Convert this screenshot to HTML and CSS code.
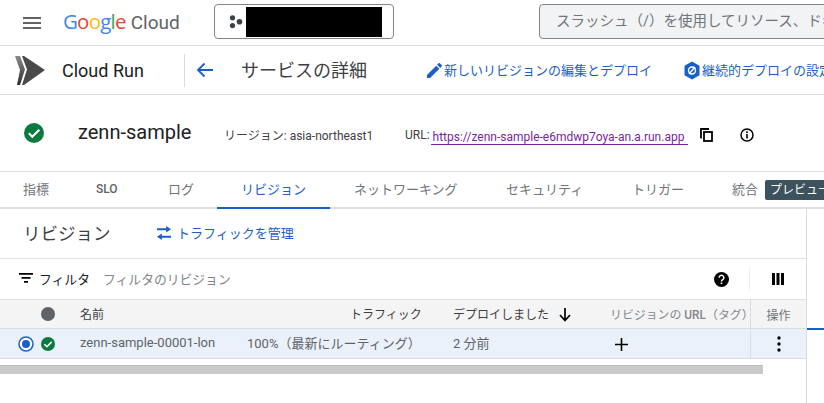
FILE: index.html
```html
<!DOCTYPE html>
<html lang="ja">
<head>
<meta charset="utf-8">
<title>Cloud Run</title>
<link rel="stylesheet" href="styles.css">
</head>
<body>
<div class="page">
  <header class="topbar">
    <svg class="menu" width="18" height="12" viewBox="0 0 18 12"><path d="M0 0h18v2H0zM0 5h18v2H0zM0 10h18v2H0z" fill="#5f6368"/></svg>
    <div class="logo"><span class="g-b">G</span><span class="g-r">o</span><span class="g-y">o</span><span class="g-b">g</span><span class="g-g">l</span><span class="g-r">e</span><span class="logo-cloud">Cloud</span></div>
    <div class="project">
      <svg width="14" height="14" viewBox="0 0 14 14"><circle cx="3.500" cy="2.800" r="2.600" fill="#3c4043"/><circle cx="3.500" cy="10.600" r="2.600" fill="#3c4043"/><circle cx="10.500" cy="6.800" r="2.800" fill="#3c4043"/></svg>
      <div class="redact"></div>
    </div>
    <div class="search">スラッシュ（/）を使用してリソース、ドキュメント、プロダクトなどを検索</div>
  </header>
  <nav class="actionbar">
    <div class="product">
      <svg width="30" height="30" viewBox="0 0 30 30"><defs><linearGradient id="cr" x1="0" y1="0" x2="0" y2="1"><stop offset="0" stop-color="#8a8a8a"/><stop offset="1" stop-color="#2f2f2f"/></linearGradient></defs><path d="M0 1l5 0 5 13.500-5 15.500-3 0 3-15z" fill="url(#cr)"/><path d="M7 1l2 0 21 14-21 15-2 0 5-15.500z" fill="#4a4a4a"/></svg>
      <span class="product-name">Cloud Run</span>
    </div>
    <div class="back">
      <svg width="18" height="16" viewBox="0 0 18 16"><path d="M17 8H2.500M8.500 1.500L2 8l6.500 6.500" fill="none" stroke="#1a5fc9" stroke-width="1.800"/></svg>
    </div>
    <h1 class="page-title">サービスの詳細</h1>
    <a class="action action-edit">
      <svg width="15" height="15" viewBox="3 3 18 18"><path d="M3 17.250V21h3.750L17.810 9.940l-3.750-3.750L3 17.250zM20.710 7.040a1 1 0 0 0 0-1.410l-2.340-2.340a1 1 0 0 0-1.410 0l-1.830 1.830 3.750 3.750 1.830-1.830z" fill="#1a5fc9"/></svg>
      <span>新しいリビジョンの編集とデプロイ</span>
    </a>
    <a class="action action-ci">
      <svg width="18" height="19" viewBox="0 0 18 19"><path d="M9 .5l7.500 4.200v9.600L9 18.500 1.500 14.300V4.700z" fill="#1a5fc9"/><circle cx="9" cy="9.500" r="3.500" fill="none" stroke="#fff" stroke-width="1.400"/><path d="M6 13l6-7" stroke="#fff" stroke-width="1.400"/></svg>
      <span>継続的デプロイの設定</span>
    </a>
  </nav>
  <section class="summary">
    <svg class="status-big" width="20" height="20" viewBox="0 0 20 20"><circle cx="10" cy="10" r="10" fill="#0b7a3e"/><path d="M4.800 10.300l3.500 3.500 7-7" fill="none" stroke="#fff" stroke-width="2.200"/></svg>
    <span class="service-name">zenn-sample</span>
    <span class="meta meta-region">リージョン: asia-northeast1</span>
    <span class="meta meta-url">URL:</span>
    <a class="url">https://zenn-sample-e6mdwp7oya-an.a.run.app</a>
    <svg class="icon-copy" width="13" height="14" viewBox="0 0 13 14"><path d="M1 10.500V1h8" fill="none" stroke="#000" stroke-width="1.800"/><rect x="4" y="4" width="8" height="9" fill="none" stroke="#000" stroke-width="1.800"/></svg>
    <svg class="icon-info" width="14" height="14" viewBox="0 0 14 14"><circle cx="7" cy="7" r="6" fill="none" stroke="#000" stroke-width="1.500"/><path d="M6.200 6h1.600v4.500H6.200zM6.200 3.300h1.600v1.600H6.200z"/></svg>
  </section>
  <div class="tabs">
    <span class="tab tab-metrics">指標</span>
    <span class="tab tab-slo">SLO</span>
    <span class="tab tab-log">ログ</span>
    <span class="tab tab-rev">リビジョン</span>
    <span class="tab tab-net">ネットワーキング</span>
    <span class="tab tab-sec">セキュリティ</span>
    <span class="tab tab-trig">トリガー</span>
    <span class="tab tab-int">統合</span>
    <span class="badge">プレビュー</span>
  </div>
  <div class="content">
    <main class="main">
      <div class="section-head">
        <h2 class="section-title">リビジョン</h2>
        <a class="traffic">
          <svg width="14" height="14" viewBox="0 0 13 13"><path d="M0 2h8.500V0L13 3 8.500 6V4H0zM13 9H4.500V7L0 10l4.500 3v-2H13z" fill="#1a5fc9"/></svg>
          <span>トラフィックを管理</span>
        </a>
      </div>
      <div class="filter">
        <svg class="filter-icon" width="14" height="10" viewBox="0 0 14 10"><path d="M0 0h14v1.700H0zM2.500 4h9v1.700h-9zM5 8h4v1.700H5z"/></svg>
        <span class="filter-label">フィルタ</span>
        <span class="filter-hint">フィルタのリビジョン</span>
        <svg class="help" width="15" height="15" viewBox="0 0 14 14"><circle cx="7" cy="7" r="7"/><path d="M4.800 5.400A2.200 2.200 0 1 1 8.200 7.200c-.8.500-1.200.8-1.200 1.600" fill="none" stroke="#fff" stroke-width="1.400"/><rect x="6.200" y="9.800" width="1.500" height="1.500" fill="#fff"/></svg>
        <span class="filter-sep"></span>
        <svg class="columns" width="12" height="12" viewBox="0 0 12 12"><path d="M0 0h3v12H0zM4.500 0h3v12h-3zM9 0h3v12H9z"/></svg>
      </div>
      <div class="thead">
        <span class="c-radio"></span>
        <span class="c-status"><svg width="14" height="14" viewBox="0 0 14 14"><circle cx="7" cy="7" r="7" fill="#5f6368"/></svg></span>
        <span class="c-name">名前</span>
        <span class="c-traffic th-traffic">トラフィック</span>
        <span class="c-deploy th-deploy">デプロイしました
          <svg width="12" height="14" viewBox="0 0 12 14"><path d="M6 0v12M1 7l5 5.500L11 7" fill="none" stroke="#000" stroke-width="1.700"/></svg>
        </span>
        <span class="c-url th-url">リビジョンの <b>URL</b>（タグ）</span>
        <span class="c-act th-act">操作</span>
      </div>
      <div class="trow">
        <span class="c-radio"><svg width="16" height="16" viewBox="0 0 16 16"><circle cx="8" cy="8" r="7" fill="#fff" stroke="#1a5fc9" stroke-width="1.500"/><circle cx="8" cy="8" r="4" fill="#1a5fc9"/></svg></span>
        <span class="c-status"><svg width="14" height="14" viewBox="0 0 14 14"><circle cx="7" cy="7" r="7" fill="#0b7a3e"/><path d="M3.400 7.200l2.500 2.500 4.800-4.800" fill="none" stroke="#fff" stroke-width="1.600"/></svg></span>
        <span class="c-name">zenn-sample-00001-lon</span>
        <span class="c-traffic">100%（最新にルーティング）</span>
        <span class="c-deploy">2 分前</span>
        <span class="c-url"><svg width="13" height="13" viewBox="0 0 13 13"><path d="M6.500 0v13M0 6.500h13" stroke="#000" stroke-width="1.600"/></svg></span>
        <span class="c-act"><svg width="4" height="16" viewBox="0 0 4 16"><circle cx="2" cy="2" r="1.700"/><circle cx="2" cy="8" r="1.700"/><circle cx="2" cy="14" r="1.700"/></svg></span>
      </div>
      <div class="scroll"></div>
    </main>
    <aside class="side"><div class="side-mark"></div></aside>
  </div>
</div>
</body>
</html>
```
FILE: styles.css
```css
* { box-sizing: border-box; }
html, body { margin: 0; padding: 0; }
body { background: #fff; font-family: Roboto, "Noto Sans CJK JP", sans-serif; overflow: hidden; }
.page { width: 824px; height: 403px; overflow: hidden; display: flex; flex-direction: column; }
a { text-decoration: none; }
h1, h2 { margin: 0; font-weight: 400; }
svg { flex: none; }

.topbar { height: 46px; flex: none; display: flex; align-items: center; border-bottom: 1px solid #dadce0; padding-left: 23px; white-space: nowrap; }
.logo { margin-left: 22px; width: 151px; flex: none; font-family: "Open Sans", sans-serif; font-size: 20.500px; letter-spacing: -.8px; line-height: 24px; margin-top: -1px; }
.g-b { color: #4285f4; } .g-r { color: #ea4335; } .g-y { color: #fbbc05; } .g-g { color: #34a853; }
.logo-cloud { color: #5f6368; margin-left: 5px; font-family: Roboto, sans-serif; font-size: 19px; letter-spacing: 0; }
.project { width: 180px; height: 35px; border: 1px solid #80868b; border-radius: 4px; display: flex; align-items: center; padding-left: 14px; flex: none; margin-top: -2px; }
.redact { width: 136px; height: 30px; background: #000; margin-left: 3px; }
.search { margin-left: 145px; flex: none; width: 420px; height: 35px; margin-top: -2px; background: #f1f3f4; border: 1px solid #80868b; border-radius: 4px; padding-left: 16px; line-height: 33px; font-size: 14.500px; color: #70757a; overflow: hidden; }

.actionbar { height: 49px; flex: none; display: flex; align-items: center; border-bottom: 1px solid #dadce0; padding-left: 15px; white-space: nowrap; }
.product { width: 170px; height: 33px; display: flex; align-items: center; border-right: 1px solid #dadce0; flex: none; }
.product-name { margin-left: 17px; font-size: 18px; color: #202124; }
.back { margin-left: 11px; width: 18px; height: 16px; flex: none; line-height: 0; }
.page-title { margin-left: 27px; font-size: 18px; width: 186px; flex: none; color: #3c4043; margin-top: -3px; }
.action { display: flex; align-items: center; color: #1a5fc9; font-size: 13px; flex: none; gap: 1px; }
.action span { margin-top: -2px; }
.action-edit { width: 256px; gap: 2px; }

.summary { height: 76px; flex: none; display: flex; align-items: center; padding-left: 24px; white-space: nowrap; }
.service-name { margin-left: 34px; font-size: 20px; color: #202124; width: 146px; flex: none; margin-top: -3px; }
.meta { font-size: 12px; color: #3c4043; flex: none; margin-top: 3px; }
.meta-region { width: 181px; }
.url { margin-left: 1px; color: #7b1fa2; font-size: 12px; border-bottom: 1px solid #7b1fa2; padding: 1px 1px 0 2px; width: 257px; flex: none; line-height: 13px; margin-top: 8px; }
.icon-copy { margin-left: 12px; margin-top: 4px; }
.icon-info { margin-left: 27px; margin-top: 4px; }

.tabs { height: 38px; flex: none; display: flex; align-items: stretch; border-top: 1px solid #e0e0e0; border-bottom: 2px solid #e0e0e0; padding-left: 23px; white-space: nowrap; }
.tab { font-size: 13px; color: #70757a; line-height: 35px; flex: none; }
.tab-metrics { width: 73px; }
.tab-slo { width: 72px; color: #5f6368; font-weight: 500; font-size: 12px; }
.tab-log { width: 49px; }
.tab-rev { width: 113px; text-align: center; color: #1a5fc9; margin-right: 24px; border-bottom: 2px solid #1a5fc9; height: 37px; }
.tab-net { width: 152px; }
.tab-sec { width: 126px; }
.tab-trig { width: 100px; }
.tab-int { width: 33px; }
.badge { height: 20px; margin-top: 8px; background: #3c525c; color: #fff; font-size: 12px; line-height: 20px; border-radius: 2px; padding: 0 5px; flex: none; }

.content { flex: 1; display: flex; min-height: 0; }
.main { width: 807px; flex: none; border-right: 1px solid #dadce0; }
.side { flex: 1; padding-top: 119px; }
.side-mark { height: 2px; background: #1a5fc9; }

.section-head { height: 50px; display: flex; align-items: center; padding: 0 0 2px 23px; border-bottom: 1px solid #e0e0e0; }
.section-title { font-size: 17.500px; color: #3c4043; width: 134px; flex: none; }
.traffic { display: flex; align-items: center; gap: 6px; color: #1a5fc9; font-size: 13px; }

.filter { height: 41px; display: flex; align-items: center; padding-left: 19px; border-bottom: 1px solid #e0e0e0; }
.filter-icon { margin-top: -2px; }
.filter-label { margin: -2px 0 0 6px; font-size: 12.800px; color: #202124; width: 64px; flex: none; }
.filter-hint { margin-top: -2px; font-size: 12.800px; color: #80868b; width: 611px; flex: none; }
.help { margin-top: 1px; }
.filter-sep { width: 1px; height: 24px; background: #eee; margin-left: 20px; flex: none; }
.columns { margin-left: 22px; }

.thead, .trow { display: grid; grid-template-columns: 41px 39px 167px 206px 157px 140px 1fr; align-items: center; width: 806px; }
.thead { height: 29px; background: #f4f4f4; border-bottom: 1px solid #dadce0; font-size: 12px; color: #3c4043; }
.trow { height: 30px; background: #ebf1fb; border-bottom: 1px solid #dadce0; font-size: 13px; color: #5f6368; }
.c-radio { display: flex; padding-left: 18px; }
.c-status { display: flex; }
.c-name, .c-traffic, .c-deploy, .c-url { white-space: nowrap; margin-top: -2px; }
.th-traffic { padding-left: 103px; }
.th-deploy { display: flex; align-items: center; gap: 10px; }
.th-deploy svg { margin-top: 4px; }
.th-url { color: #80868b; font-size: 11.900px; }
.th-url b { font-weight: 500; }
.trow .c-url { padding-left: 5px; display: flex; margin-top: 2px; }
.c-act { height: 100%; border-left: 1px solid #dadce0; display: flex; align-items: center; justify-content: center; }
.th-act { color: #70757a; }
.scroll { margin-top: 6px; width: 763px; height: 9px; background: #c9c9c9; border-top: 1px solid #bdbdbd; }
```
